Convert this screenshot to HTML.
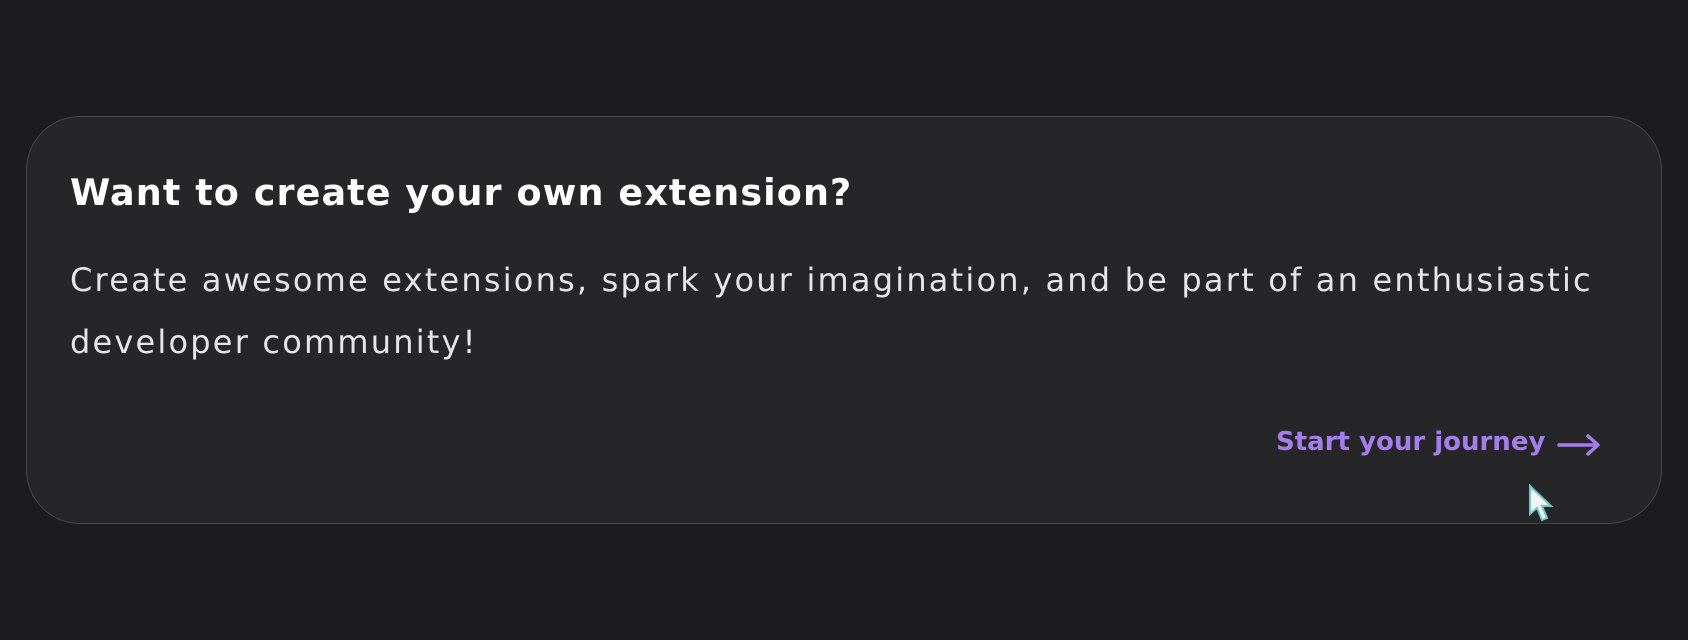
<!DOCTYPE html>
<html><head><style>
html,body{margin:0;padding:0;width:1688px;height:640px;background:#1c1c1e;overflow:hidden}
.card{position:absolute;left:26px;top:116px;width:1636px;height:408px;border:1.5px solid #47474b;border-radius:54px;background:#262628;box-sizing:border-box}
.t{position:absolute;left:70px;top:171px;font:bold 36.5px "DejaVu Sans",sans-serif;color:#fff;white-space:nowrap;letter-spacing:1.1px}
.b{position:absolute;left:70px;top:249px;width:1600px;font:32px/62px "DejaVu Sans",sans-serif;color:#e6e6e6;letter-spacing:2.2px;white-space:nowrap}
.l{position:absolute;left:1276px;top:427px;font:bold 26px "DejaVu Sans",sans-serif;color:#a57ded;white-space:nowrap}
</style></head><body>
<div class="card"></div>
<div class="t">Want to create your own extension?</div>
<div class="b">Create awesome extensions, spark your imagination, and be part of an enthusiastic<br>developer community!</div>
<div class="l">Start your journey</div>
<svg style="position:absolute;left:1556px;top:432px" width="46" height="26" viewBox="0 0 46 26"><path d="M3 13H42M32 4L42 13L32 22" fill="none" stroke="#a57ded" stroke-width="3.5" stroke-linecap="round" stroke-linejoin="round"/></svg>
<svg style="position:absolute;left:1528px;top:484px" width="26" height="40" viewBox="0 0 26 40"><path d="M2 2L2 30L9 24L14 36L19 34L14 22L23 22Z" fill="#f4f4f0" stroke="#6fc9c4" stroke-width="2"/></svg>
</body></html>
